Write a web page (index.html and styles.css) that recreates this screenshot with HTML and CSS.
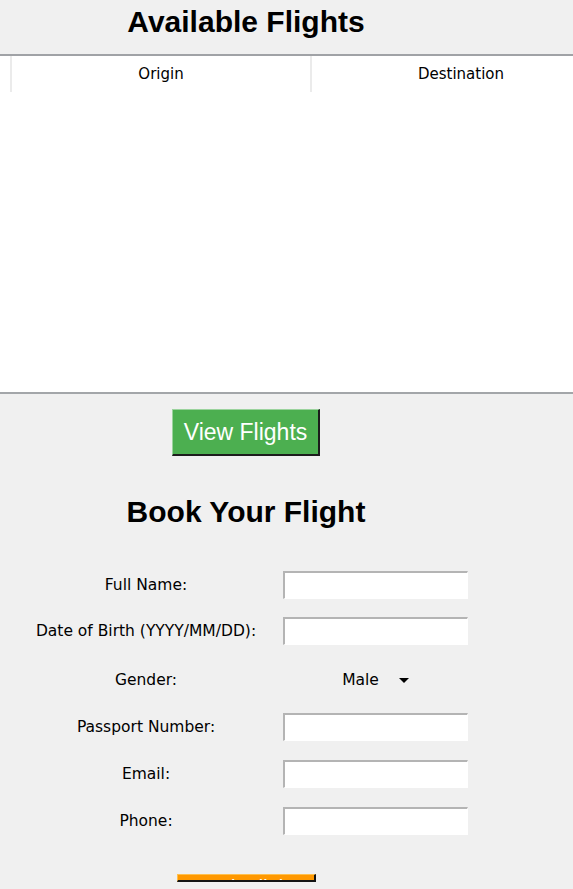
FILE: index.html
```html
<!DOCTYPE html>
<html>
<head>
<meta charset="utf-8">
<link rel="stylesheet" href="styles.css">
</head>
<body>
<div class="app">
  <div class="heading heading-top"><h1 class="title">Available Flights</h1></div>
  <div class="tree">
    <div class="tree-head">
      <div class="col col0"></div>
      <div class="col">Origin</div>
      <div class="col">Destination</div>
    </div>
  </div>
  <div class="center btn-row"><button class="btn-green" type="button">View Flights</button></div>
  <div class="heading heading-book"><h2 class="title">Book Your Flight</h2></div>
  <div class="form">
    <div class="lbl">Full Name:</div><div class="field"><div class="entry"></div></div>
    <div class="lbl">Date of Birth (YYYY/MM/DD):</div><div class="field"><div class="entry"></div></div>
    <div class="lbl lbl-gender">Gender:</div>
    <div class="field field-gender"><div class="option">Male <svg class="arrow" width="10" height="5" viewBox="0 0 10 5"><path d="M0 0H10L5 5Z" fill="#000"/></svg></div></div>
    <div class="lbl">Passport Number:</div><div class="field"><div class="entry"></div></div>
    <div class="lbl">Email:</div><div class="field"><div class="entry"></div></div>
    <div class="lbl">Phone:</div><div class="field"><div class="entry"></div></div>
  </div>
  <div class="center orange-row"><div class="btn-orange"><span>Book Flight</span></div></div>
</div>
</body>
</html>
```
FILE: styles.css
```css
html, body {
  margin: 0;
  padding: 0;
  background: #f0f0f0;
  overflow: hidden;
}
.app {
  width: 573px;
  height: 889px;
  overflow: hidden;
  font-family: "DejaVu Sans", sans-serif;
  color: #000;
}
.heading {
  width: 492px;
  display: flex;
  justify-content: center;
}
.title {
  margin: 0;
  font-family: "Liberation Sans", Arial, sans-serif;
  font-weight: bold;
  font-size: 30px;
  line-height: 32px;
  white-space: nowrap;
}
.heading-top {
  padding-top: 6px;
  box-sizing: border-box;
  height: 54px;
}
.tree {
  width: 573px;
  height: 340px;
  box-sizing: border-box;
  background: #fff;
  border-top: 2px solid #a0a2a6;
  border-bottom: 2px solid #a3a6a9;
  overflow: hidden;
}
.tree-head {
  display: flex;
  height: 36px;
  white-space: nowrap;
}
.col {
  flex: 0 0 300px;
  box-sizing: border-box;
  border-left: 2px solid #ebebeb;
  display: flex;
  align-items: center;
  justify-content: center;
  font-size: 15px;
}
.col0 {
  flex: 0 0 10px;
  border-left: none;
}
.center {
  width: 492px;
  display: flex;
  justify-content: center;
}
.btn-row {
  margin-top: 15px;
}
.btn-green {
  width: 148px;
  height: 47px;
  box-sizing: border-box;
  margin: 0;
  padding: 0;
  background: #4caf50;
  color: #fff;
  font-family: "Liberation Sans", Arial, sans-serif;
  font-size: 23px;
  border-style: solid;
  border-width: 1px 2px 2px 1px;
  border-color: #9bd39d #1c1c1c #1c1c1c #9bd39d;
}
.heading-book {
  margin-top: 40px;
}
.form {
  margin-top: 43px;
  margin-left: 9px;
  display: grid;
  grid-template-columns: 274px 185px;
  grid-template-rows: 46px 46px 50px 47px 47px 47px;
}
.lbl {
  height: 28px;
  display: flex;
  align-items: center;
  justify-content: center;
  font-size: 15.5px;
  white-space: nowrap;
}
.entry {
  width: 185px;
  height: 28px;
  box-sizing: border-box;
  background: #fff;
  border-style: solid;
  border-width: 2px 1px 1px 2px;
  border-color: #b4b4b4 #ffffff #ffffff #b4b4b4;
}
.lbl-gender {
  height: 34px;
}
.field-gender {
  height: 34px;
  display: flex;
  align-items: center;
  justify-content: center;
}
.option {
  display: flex;
  align-items: center;
  gap: 20px;
  font-size: 15.5px;
}
.arrow {
  display: block;
}
.orange-row {
  margin-top: 20px;
}
.btn-orange {
  width: 139px;
  height: 8px;
  box-sizing: border-box;
  background: #ff9800;
  border-style: solid;
  border-width: 1px 2px 2px 1px;
  border-color: #ffc04d #141414 #141414 #ffc04d;
  overflow: hidden;
  text-align: center;
}
.btn-orange span {
  display: block;
  color: #fff;
  font-family: "Liberation Sans", Arial, sans-serif;
  font-size: 20px;
  line-height: 20px;
  margin-top: 2px;
  white-space: nowrap;
}
```
